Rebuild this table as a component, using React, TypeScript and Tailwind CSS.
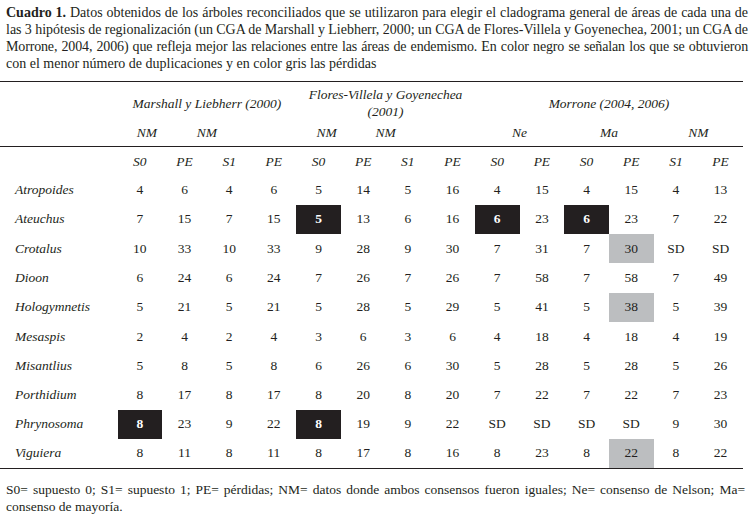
const rows: { name: string; values: string[] }[] = [
  { name: 'Atropoides', values: ['4', '6', '4', '6', '5', '14', '5', '16', '4', '15', '4', '15', '4', '13'] },
  { name: 'Ateuchus', values: ['7', '15', '7', '15', '5', '13', '6', '16', '6', '23', '6', '23', '7', '22'] },
  { name: 'Crotalus', values: ['10', '33', '10', '33', '9', '28', '9', '30', '7', '31', '7', '30', 'SD', 'SD'] },
  { name: 'Dioon', values: ['6', '24', '6', '24', '7', '26', '7', '26', '7', '58', '7', '58', '7', '49'] },
  { name: 'Hologymnetis', values: ['5', '21', '5', '21', '5', '28', '5', '29', '5', '41', '5', '38', '5', '39'] },
  { name: 'Mesaspis', values: ['2', '4', '2', '4', '3', '6', '3', '6', '4', '18', '4', '18', '4', '19'] },
  { name: 'Misantlius', values: ['5', '8', '5', '8', '6', '26', '6', '30', '5', '28', '5', '28', '5', '26'] },
  { name: 'Porthidium', values: ['8', '17', '8', '17', '8', '20', '8', '20', '7', '22', '7', '22', '7', '23'] },
  { name: 'Phrynosoma', values: ['8', '23', '9', '22', '8', '19', '9', '22', 'SD', 'SD', 'SD', 'SD', '9', '30'] },
  { name: 'Viguiera', values: ['8', '11', '8', '11', '8', '17', '8', '16', '8', '23', '8', '22', '8', '22'] },
]

// black = fewest duplications, gray = losses
const black: Record<string, number[]> = {
  Ateuchus: [4, 8, 10],
  Phrynosoma: [0, 4],
}
const gray: Record<string, number[]> = {
  Crotalus: [11],
  Hologymnetis: [11],
  Viguiera: [11],
}

const subHeads = ['S0', 'PE', 'S1', 'PE', 'S0', 'PE', 'S1', 'PE', 'S0', 'PE', 'S0', 'PE', 'S1', 'PE']

export default function App() {
  return (
    <div className="w-[756px] h-[518px] bg-white text-[#231f20] font-['Liberation_Serif','Times_New_Roman',serif] overflow-hidden">
      {/* caption, broken line by line like the print layout */}
      <div className="ml-[6px] w-[742px] pt-[4px] text-[14px] leading-[17px]">
        <div className="whitespace-nowrap text-justify [text-align-last:justify] [word-spacing:-0.8px]">
          <b>Cuadro 1.</b> Datos obtenidos de los árboles reconciliados que se utilizaron para elegir el cladograma general de áreas de cada una de
        </div>
        <div className="whitespace-nowrap text-justify [text-align-last:justify] [word-spacing:-0.8px]">
          las 3 hipótesis de regionalización (un CGA de Marshall y Liebherr, 2000; un CGA de Flores-Villela y Goyenechea, 2001; un CGA de
        </div>
        <div className="whitespace-nowrap text-justify [text-align-last:justify] [word-spacing:-2px] tracking-[-0.15px]">
          Morrone, 2004, 2006) que refleja mejor las relaciones entre las áreas de endemismo. En color negro se señalan los que se obtuvieron
        </div>
        <div className="whitespace-nowrap">con el menor número de duplicaciones y en color gris las pérdidas</div>
      </div>

      <table className="mt-[9px] w-[743px] table-fixed border-collapse text-[13.5px]">
        <colgroup>
          <col className="w-[117.5px]" />
          {subHeads.map((_, i) => (
            <col key={i} className="w-[44.68px]" />
          ))}
        </colgroup>
        <thead>
          <tr className="h-[39px] border-t border-[#231f20] italic">
            <th></th>
            <th colSpan={4} className="font-normal text-center pt-[5px]">Marshall y Liebherr (2000)</th>
            <th colSpan={4} className="font-normal text-center leading-[17px] pt-[4px] px-[2px]">
              Flores-Villela y Goyenechea (2001)
            </th>
            <th colSpan={6} className="font-normal text-center pt-[5px]">Morrone (2004, 2006)</th>
          </tr>
          <tr className="h-[26px] border-b border-[#231f20] italic">
            <th></th>
            <th className="font-normal text-center pl-[14px] pb-[1px]">NM</th>
            <th colSpan={2} className="font-normal text-center pb-[1px]">NM</th>
            <th></th>
            <th className="font-normal text-center pl-[16px] pb-[1px]">NM</th>
            <th colSpan={2} className="font-normal text-center pb-[1px]">NM</th>
            <th></th>
            <th colSpan={2} className="font-normal text-center pb-[1px]">Ne</th>
            <th colSpan={2} className="font-normal text-center pb-[1px]">Ma</th>
            <th colSpan={2} className="font-normal text-center pb-[1px]">NM</th>
          </tr>
        </thead>
        <tbody>
          <tr className="h-[29px] italic">
            <td></td>
            {subHeads.map((h, i) => (
              <td key={i} className="text-center pt-[2px]">
                {h}
              </td>
            ))}
          </tr>
          {rows.map((row, r) => (
            <tr key={row.name} className={`h-[29.3px] ${r === rows.length - 1 ? 'border-b border-[#231f20]' : ''}`}>
              <td className="italic pl-[15px]">{row.name}</td>
              {row.values.map((v, i) => {
                const isBlack = black[row.name]?.includes(i)
                const isGray = gray[row.name]?.includes(i)
                return (
                  <td
                    key={i}
                    className={`text-center ${
                      isBlack ? 'bg-[#231f20] text-white font-bold' : isGray ? 'bg-[#bcbec0]' : ''
                    }`}
                  >
                    {v}
                  </td>
                )
              })}
            </tr>
          ))}
        </tbody>
      </table>

      <p className="ml-[6px] w-[739px] mt-[12px] text-[13.5px] leading-[17px] text-justify">
        S0= supuesto 0; S1= supuesto 1; PE= pérdidas; NM= datos donde ambos consensos fueron iguales; Ne= consenso de
        Nelson; Ma= consenso de mayoría.
      </p>
    </div>
  )
}
